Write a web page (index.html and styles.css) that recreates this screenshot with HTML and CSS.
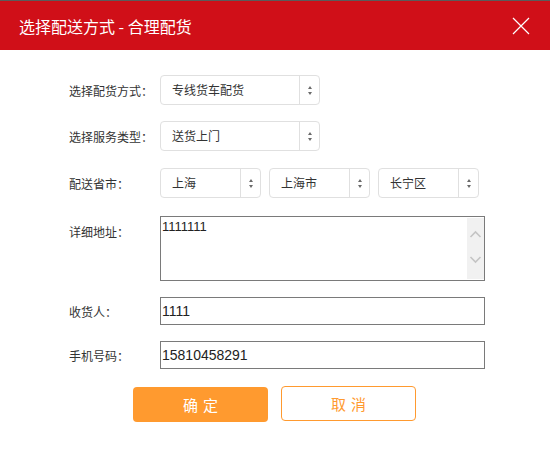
FILE: index.html
```html
<!DOCTYPE html>
<html lang="zh-CN">
<head>
    <meta charset="UTF-8">
    <title>选择配送方式 - 合理配货</title>
    <link rel="stylesheet" href="styles.css">
</head>
<body>
    <div class="dialog">
        <div class="dialog-head">
            <h2>选择配送方式 - 合理配货</h2>
            <svg class="close" width="18" height="18" viewBox="0 0 18 18">
                <path d="M1 1L17 17M17 1L1 17" stroke="#fff" stroke-width="1.2" fill="none"/>
            </svg>
        </div>
        <div class="dialog-body">
            <div class="row row-select">
                <span class="label">选择配货方式：</span>
                <div class="select wide"><span class="val">专线货车配货</span><span class="arrows"><i class="up"></i><i class="down"></i></span></div>
            </div>
            <div class="row row-select second">
                <span class="label">选择服务类型：</span>
                <div class="select wide"><span class="val">送货上门</span><span class="arrows"><i class="up"></i><i class="down"></i></span></div>
            </div>
            <div class="row row-select third">
                <span class="label">配送省市：</span>
                <div class="selects">
                    <div class="select small"><span class="val">上海</span><span class="arrows"><i class="up"></i><i class="down"></i></span></div>
                    <div class="select small"><span class="val">上海市</span><span class="arrows"><i class="up"></i><i class="down"></i></span></div>
                    <div class="select small"><span class="val">长宁区</span><span class="arrows"><i class="up"></i><i class="down"></i></span></div>
                </div>
            </div>
            <div class="row row-area">
                <span class="label">详细地址：</span>
                <div class="area">
                    <span class="area-text">1111111</span>
                    <div class="scroll">
                        <svg width="17" height="62" viewBox="0 0 17 62">
                            <path d="M3.5 19L8.5 14L13.5 19" stroke="#c4c4c4" stroke-width="1.6" fill="none"/>
                            <path d="M3.5 39L8.5 44L13.5 39" stroke="#c4c4c4" stroke-width="1.6" fill="none"/>
                        </svg>
                    </div>
                </div>
            </div>
            <div class="row row-input">
                <span class="label">收货人：</span>
                <div class="input">1111</div>
            </div>
            <div class="row row-input second-input">
                <span class="label">手机号码：</span>
                <div class="input">15810458291</div>
            </div>
            <div class="buttons">
                <button class="btn ok">确定</button>
                <button class="btn cancel">取消</button>
            </div>
        </div>
    </div>
</body>
</html>
```

FILE: styles.css
```css
body{
    margin: 0;
    background: #fff;
    font-family: "Liberation Sans", "Noto Sans CJK SC", sans-serif;
    color: #333;
}
.dialog{
    width: 550px;
    height: 458px;
    background: #fff;
}
.dialog-head{
    height: 49px;
    border-top: 1px solid #5b5b5b;
    background: #d00f18;
    display: flex;
    align-items: center;
    justify-content: space-between;
    padding: 0 20px 0 19px;
}
.dialog-head h2{
    margin: 0;
    font-size: 16px;
    font-weight: normal;
    color: #fff;
    font-family: "Noto Sans CJK SC", sans-serif;
}
.close{
    margin-top: 1px;
}
.dialog-body{
    padding: 25px 0 0 69px;
}
.row{
    display: flex;
    align-items: center;
}
.label{
    width: 91px;
    flex: none;
    font-size: 12px;
    color: #333;
    font-family: "Noto Sans CJK SC", sans-serif;
}
.second{
    margin-top: 16px;
}
.third{
    margin-top: 17px;
}
.select{
    height: 28px;
    border: 1px solid #e0e0e0;
    border-radius: 4px;
    display: flex;
    box-sizing: content-box;
}
.select .val{
    flex: 1;
    padding-left: 11px;
    line-height: 28px;
    font-size: 12px;
    color: #333;
    font-family: "Noto Sans CJK SC", sans-serif;
}
.select .arrows{
    width: 19px;
    border-left: 1px solid #e0e0e0;
    display: flex;
    flex-direction: column;
    align-items: center;
    justify-content: center;
    gap: 3px;
}
.arrows i{
    width: 0;
    height: 0;
    border-left: 2.5px solid transparent;
    border-right: 2.5px solid transparent;
}
.arrows .up{
    border-bottom: 3px solid #6a6a6a;
}
.arrows .down{
    border-top: 3px solid #6a6a6a;
}
.wide{
    width: 158px;
}
.selects{
    display: flex;
    gap: 8px;
}
.small{
    width: 99px;
}
.row-area{
    align-items: flex-start;
    margin-top: 18px;
}
.row-area .label{
    padding-top: 7px;
}
.area{
    width: 323px;
    height: 63px;
    border: 1px solid #7a7a7a;
    display: flex;
    justify-content: space-between;
}
.area-text{
    font-size: 13px;
    color: #222;
    padding: 2px 0 0 1px;
}
.scroll{
    width: 17px;
    background: #f1f1f1;
    margin: 1px 0;
}
.scroll svg{
    display: block;
}
.row-input{
    margin-top: 16px;
}
.second-input{
    margin-top: 16px;
}
.input{
    width: 322px;
    height: 26px;
    border: 1px solid #7a7a7a;
    font-size: 14px;
    line-height: 26px;
    color: #222;
    padding-left: 1px;
}
.buttons{
    display: flex;
    gap: 13px;
    margin: 18px 0 0 64px;
}
.btn{
    width: 135px;
    height: 35px;
    border-radius: 4px;
    font-size: 15px;
    letter-spacing: 5px;
    text-indent: 5px;
    font-family: "Noto Sans CJK SC", sans-serif;
    cursor: pointer;
}
.ok{
    background: #ff9a2f;
    border: none;
    color: #fff;
}
.cancel{
    background: #fff;
    border: 1px solid #ff9a2f;
    color: #ff9a2f;
    margin-top: -1px;
}
```
